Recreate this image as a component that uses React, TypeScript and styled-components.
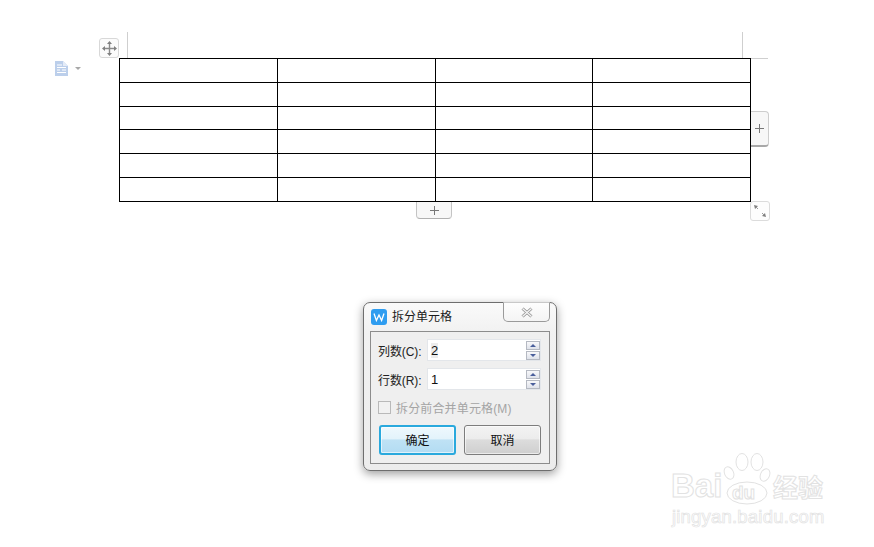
import React from "react";
import styled, { createGlobalStyle } from "styled-components";

const Global = createGlobalStyle`
  html, body { margin: 0; padding: 0; background: #fff; }
  body { font-family: "Liberation Sans", "Noto Sans CJK SC", sans-serif; }
`;

const Page = styled.div`
  position: relative;
  width: 874px;
  height: 547px;
  overflow: hidden;
  background: #fff;
  padding-top: 58px;
  box-sizing: border-box;
  display: flex;
  flex-direction: column;
`;

const TableArea = styled.div`
  position: relative;
  width: 632px;
  margin-left: 119px;
`;

const Grid = styled.table`
  border-collapse: collapse;
  table-layout: fixed;
  width: 631px;
  height: 144px;
`;

const Cell = styled.td<{ $w: number }>`
  width: ${(p) => p.$w}px;
  box-sizing: border-box;
  border: 1px solid #000;
  padding: 0;
`;

const Row = styled.tr<{ $h: number }>`
  height: ${(p) => p.$h}px;
`;

const VMark = styled.span<{ $left: number }>`
  position: absolute;
  left: ${(p) => p.$left}px;
  top: -26px;
  width: 1px;
  height: 26px;
  background: #cfcfcf;
`;

const HMark = styled.span`
  position: absolute;
  left: 632px;
  top: 0;
  width: 17px;
  height: 1px;
  background: #cfcfcf;
`;

const MoveHandle = styled.div`
  position: absolute;
  left: -20px;
  top: -20px;
  width: 20px;
  height: 20px;
  box-sizing: border-box;
  border: 1px solid #d8d8d8;
  border-radius: 3px;
  background: #fbfbfb;
  display: flex;
  align-items: center;
  justify-content: center;
`;

const DocMenu = styled.div`
  position: absolute;
  left: -64px;
  top: 3px;
  display: flex;
  align-items: center;
  gap: 7px;
`;

const Caret = styled.span`
  width: 0;
  height: 0;
  border-left: 3px solid transparent;
  border-right: 3px solid transparent;
  border-top: 3px solid #a8a8a8;
`;

const AddColumn = styled.div`
  position: absolute;
  left: 632px;
  top: 53px;
  width: 18px;
  height: 36px;
  box-sizing: border-box;
  border: 1px solid #cdcdcd;
  border-left: none;
  border-bottom: 2px solid #a8a8a8;
  border-radius: 0 4px 4px 0;
  background: #f7f7f7;
  display: flex;
  align-items: center;
  justify-content: center;
`;

const AddRow = styled.div`
  position: absolute;
  left: 297px;
  top: 144px;
  width: 36px;
  height: 17px;
  box-sizing: border-box;
  border: 1px solid #c4c4c4;
  border-top: none;
  border-bottom: 1px solid #b0b0b0;
  border-radius: 0 0 4px 4px;
  background: #f7f7f7;
  display: flex;
  align-items: center;
  justify-content: center;
`;

const ResizeHandle = styled.div`
  position: absolute;
  left: 631px;
  top: 143px;
  width: 20px;
  height: 20px;
  box-sizing: border-box;
  border: 1px solid #dcdcdc;
  border-radius: 3px;
  background: #fdfdfd;
  display: flex;
  align-items: center;
  justify-content: center;
`;

const Dialog = styled.div`
  position: relative;
  width: 194px;
  height: 169px;
  margin: 100px 0 0 363px;
  box-sizing: border-box;
  border: 1px solid #6e6e6e;
  border-radius: 7px;
  background: linear-gradient(#fafafa, #f1f1f1 30px, #ececec);
  box-shadow: 0 3px 10px rgba(0, 0, 0, 0.38);
  padding: 6px;
  display: flex;
  flex-direction: column;
`;

const TitleBar = styled.div`
  height: 22px;
  display: flex;
  align-items: flex-start;
  gap: 5px;
  padding-left: 1px;
  font-size: 12px;
  line-height: 16px;
  color: #1a1a1a;
`;

const AppIcon = styled.div`
  width: 16px;
  height: 16px;
  border-radius: 3px;
  background: #2f9df0;
  display: flex;
  align-items: center;
  justify-content: center;
`;

const CloseButton = styled.div`
  position: absolute;
  right: 6px;
  top: -1px;
  width: 47px;
  height: 20px;
  box-sizing: border-box;
  border: 1px solid #9a9a9a;
  border-top-color: #c8c8c8;
  border-radius: 0 0 5px 5px;
  background: linear-gradient(#fdfdfd, #f4f4f4);
  display: flex;
  align-items: center;
  justify-content: center;
`;

const Panel = styled.div`
  flex: 1;
  box-sizing: border-box;
  border: 1px solid #8c8c8c;
  background: #efefef;
  padding: 7px 8px 8px 7px;
  display: flex;
  flex-direction: column;
`;

const Field = styled.div`
  height: 22px;
  margin-bottom: 7px;
  display: flex;
  align-items: center;
  justify-content: space-between;
  font-size: 12px;
  letter-spacing: -0.1px;
  color: #222;
`;

const Input = styled.div`
  width: 114px;
  height: 22px;
  box-sizing: border-box;
  background: #fff;
  border: 1px solid #e3e6ea;
  display: flex;
  align-items: center;
  justify-content: space-between;
  padding: 0 0 0 3px;
  font-size: 13px;
  color: #111;
`;

const Value = styled.span<{ $selected?: boolean }>`
  background: ${(p) => (p.$selected ? "#ececec" : "transparent")};
  line-height: 15px;
  padding: 0;
`;

const Spinner = styled.div`
  width: 14px;
  display: flex;
  flex-direction: column;
  gap: 1px;
`;

const SpinBtn = styled.div<{ $down?: boolean }>`
  height: 9px;
  box-sizing: border-box;
  border: 1px solid #b5b9c2;
  background: linear-gradient(#f8f8fa, #dfe2ea);
  display: flex;
  align-items: center;
  justify-content: center;
  &::after {
    content: "";
    width: 0;
    height: 0;
    border-left: 3px solid transparent;
    border-right: 3px solid transparent;
    ${(p) =>
      p.$down ? "border-top: 3px solid #4a5f9c;" : "border-bottom: 3px solid #4a5f9c;"}
  }
`;

const CheckRow = styled.div`
  margin-top: 3px;
  height: 14px;
  display: flex;
  align-items: center;
  gap: 5px;
  font-size: 12px;
  letter-spacing: 0.15px;
  color: #a4a4a4;
`;

const Box = styled.span`
  width: 13px;
  height: 13px;
  box-sizing: border-box;
  border: 1px solid #b9b9b9;
  background: #f1f1f1;
  flex: none;
`;

const Buttons = styled.div`
  margin-top: 11px;
  display: flex;
  justify-content: space-between;
  padding-left: 1px;
`;

const Button = styled.div<{ $primary?: boolean }>`
  width: 77px;
  height: 30px;
  box-sizing: border-box;
  padding-bottom: 2px;
  border-radius: 3px;
  font-size: 12px;
  color: #111;
  display: flex;
  align-items: center;
  justify-content: center;
  border: ${(p) => (p.$primary ? "2px solid #2aa9dd" : "1px solid #7d7d7d")};
  background: ${(p) =>
    p.$primary
      ? "linear-gradient(#eef8fd, #e3f3fb 45%, #bfe2f5 50%, #b3dcf3)"
      : "linear-gradient(#f3f3f3, #ececec 45%, #dcdcdc 50%, #cfcfcf)"};
  box-shadow: inset 0 0 0 1px rgba(255, 255, 255, 0.6);
`;

const Watermark = styled.div`
  position: absolute;
  left: 670px;
  top: 452px;
  width: 165px;
  height: 76px;
  pointer-events: none;
`;

const WmBig = styled.span<{ $x: number; $size: number; $top: number }>`
  position: absolute;
  left: ${(p) => p.$x}px;
  top: ${(p) => p.$top}px;
  font-size: ${(p) => p.$size}px;
  line-height: 1;
  font-weight: 700;
  color: #fff;
  -webkit-text-stroke: 1px #e2e2e2;
  white-space: nowrap;
`;

const WmUrl = styled.span`
  position: absolute;
  left: 2px;
  top: 56px;
  font-size: 18.5px;
  line-height: 1;
  letter-spacing: 0.2px;
  color: #fff;
  -webkit-text-stroke: 0.7px #e2e2e2;
  white-space: nowrap;
`;

const PawSvg = styled.svg`
  position: absolute;
  left: 52px;
  top: 0;
`;

const widths = [157.75, 157.75, 157.75, 157.75];
const heights = [24, 24, 23, 24, 24, 24];

const Plus = () => (
  <svg width="11" height="11" viewBox="0 0 11 11">
    <path d="M5.5 1v9M1 5.5h9" stroke="#777" strokeWidth="1" fill="none" />
  </svg>
);

export default function App() {
  return (
    <Page>
      <Global />
      <TableArea>
        <VMark $left={8} />
        <VMark $left={623} />
        <HMark />
        <DocMenu>
          <svg width="13" height="15" viewBox="0 0 13 15">
            <path d="M0 0h8l5 5v10H0z" fill="#bccfeb" />
            <path d="M8 0v5h5" fill="#e4ebf7" />
            <path d="M2 4h5M2 6.5h9M2 9h3M7 9h4M2 11.5h9" stroke="#fff" strokeWidth="1" />
          </svg>
          <Caret />
        </DocMenu>
        <MoveHandle>
          <svg width="15" height="15" viewBox="0 0 15 15">
            <path d="M7.5 2v11M2 7.5h11" stroke="#8a8a8a" strokeWidth="1.4" />
            <path d="M7.5 0l2.5 3H5zM7.5 15l2.5-3H5zM0 7.5l3-2.5v5zM15 7.5l-3-2.5v5z" fill="#808080" />
          </svg>
        </MoveHandle>
        <Grid>
          <tbody>
            {heights.map((h, r) => (
              <Row key={r} $h={h}>
                {widths.map((w, c) => (
                  <Cell key={c} $w={w} />
                ))}
              </Row>
            ))}
          </tbody>
        </Grid>
        <AddColumn><Plus /></AddColumn>
        <AddRow><Plus /></AddRow>
        <ResizeHandle>
          <svg width="14" height="14" viewBox="0 0 14 14">
            <path d="M1 1l4 1L2 5zM13 13l-4-1 3-3z" fill="#808080" />
            <path d="M3 3l2 2M11 11L9 9" stroke="#999" strokeWidth="1" />
          </svg>
        </ResizeHandle>
      </TableArea>

      <Dialog>
        <TitleBar>
          <AppIcon>
            <svg width="12" height="10" viewBox="0 0 12 10">
              <path d="M1 1.5l2.4 7L6 3l2.6 5.5L11 1.5" stroke="#fff" strokeWidth="1.3" fill="none" />
            </svg>
          </AppIcon>
          拆分单元格
        </TitleBar>
        <CloseButton>
          <svg width="14" height="11" viewBox="0 0 14 11">
            <path d="M2.5 1.5l9 8M11.5 1.5l-9 8" stroke="#8f8f8f" strokeWidth="3" />
            <path d="M2.5 1.5l9 8M11.5 1.5l-9 8" stroke="#f4f4f4" strokeWidth="1.4" />
          </svg>
        </CloseButton>
        <Panel>
          <Field>
            列数(C):
            <Input>
              <Value $selected>2</Value>
              <Spinner>
                <SpinBtn />
                <SpinBtn $down />
              </Spinner>
            </Input>
          </Field>
          <Field>
            行数(R):
            <Input>
              <Value>1</Value>
              <Spinner>
                <SpinBtn />
                <SpinBtn $down />
              </Spinner>
            </Input>
          </Field>
          <CheckRow>
            <Box />
            拆分前合并单元格(M)
          </CheckRow>
          <Buttons>
            <Button $primary>确定</Button>
            <Button>取消</Button>
          </Buttons>
        </Panel>
      </Dialog>

      <Watermark>
        <WmBig $x={1} $top={17} $size={33}>Bai</WmBig>
        <PawSvg width="50" height="54" viewBox="0 0 50 54">
          <g fill="#fff" stroke="#e2e2e2" strokeWidth="1">
            <ellipse cx="7" cy="21" rx="4.5" ry="6.5" transform="rotate(-25 7 21)" />
            <ellipse cx="20" cy="10" rx="6" ry="8.5" />
            <ellipse cx="35" cy="10" rx="6" ry="8.5" />
            <ellipse cx="43" cy="23" rx="4.5" ry="6.5" transform="rotate(25 43 23)" />
            <ellipse cx="25" cy="41" rx="20" ry="11" />
          </g>
        </PawSvg>
        <WmBig $x={62} $top={31} $size={19}>du</WmBig>
        <WmBig $x={103} $top={24} $size={25}>经验</WmBig>
        <WmUrl>jingyan.baidu.com</WmUrl>
      </Watermark>
    </Page>
  );
}
